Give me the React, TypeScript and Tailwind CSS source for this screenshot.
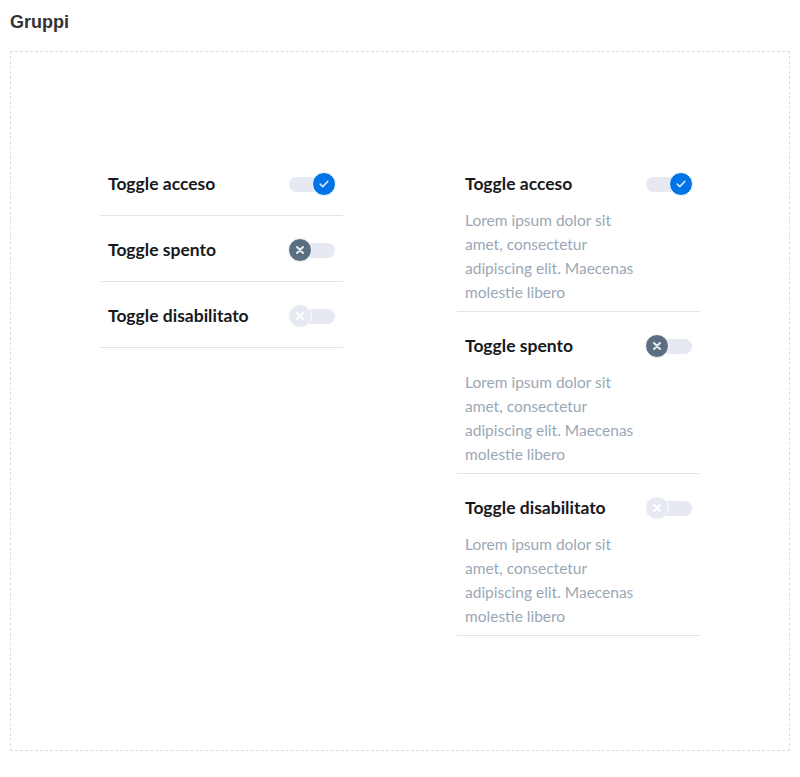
import React from "react";

type State = "on" | "off" | "disabled";

function Toggle({ state }: { state: State }) {
  const on = state === "on";
  return (
    <div className="relative w-[48px] h-6 shrink-0">
      <div className="absolute left-[1px] right-[1px] top-[5px] h-[15px] rounded-full bg-[#e6e9f2]" />
      <div
        className={
          "absolute top-0 w-6 h-6 rounded-full border-[1.5px] border-white flex items-center justify-center " +
          (on ? "right-0 bg-[#0073e6]" : state === "off" ? "left-0 bg-[#5c6f82]" : "left-0 bg-[#e6e9f2]")
        }
      >
        {on ? (
          <svg width="12" height="12" viewBox="0 0 12 12" fill="none">
            <path d="M2.2 6.2 L4.8 8.6 L9.8 3.4" stroke="#cfe3fa" strokeWidth="1.6" strokeLinecap="round" strokeLinejoin="round" />
          </svg>
        ) : (
          <svg width="10" height="10" viewBox="0 0 10 10" fill="none">
            <path d="M2 2 L8 8 M8 2 L2 8" stroke={state === "off" ? "#e8edf2" : "#ffffff"} strokeWidth="2" strokeLinecap="round" />
          </svg>
        )}
      </div>
    </div>
  );
}

const titleFont = { fontFamily: "Lato, 'Noto Sans', sans-serif" };

function SimpleRow({ label, state }: { label: string; state: State }) {
  return (
    <div className="flex items-center justify-between pl-2 pr-[7px] pt-[22px] pb-[19px] border-b border-[#e3e4e6]">
      <span className="text-[17.5px] leading-6 font-bold text-[#17191c]" style={titleFont}>
        {label}
      </span>
      <Toggle state={state} />
    </div>
  );
}

function DescRow({ label, state }: { label: string; state: State }) {
  return (
    <div className="pl-2 pr-[7px] pt-[22px] pb-[7px] border-b border-[#e3e4e6]">
      <div className="flex items-center justify-between">
        <span className="text-[17.5px] leading-6 font-bold text-[#17191c]" style={titleFont}>
          {label}
        </span>
        <Toggle state={state} />
      </div>
      <p className="mt-3 text-[15.5px] leading-6 text-[#9aa8b6] w-[180px]" style={titleFont}>
        Lorem ipsum dolor sit amet, consectetur adipiscing elit. Maecenas molestie libero
      </p>
    </div>
  );
}

export default function App() {
  return (
    <div className="bg-white w-[800px] h-[777px] p-[10px]">
      <h2
        className="text-[18px] leading-6 font-bold text-[#333333] mb-[17px]"
        style={{ fontFamily: "'Liberation Sans', Arial, sans-serif" }}
      >
        Gruppi
      </h2>
      <div className="h-[700px] border border-dashed border-[#dcdcdc] pt-[98px] pl-[89px] flex gap-[114px]">
        <div className="w-[243px]">
          <SimpleRow label="Toggle acceso" state="on" />
          <SimpleRow label="Toggle spento" state="off" />
          <SimpleRow label="Toggle disabilitato" state="disabled" />
        </div>
        <div className="w-[243px]">
          <DescRow label="Toggle acceso" state="on" />
          <DescRow label="Toggle spento" state="off" />
          <DescRow label="Toggle disabilitato" state="disabled" />
        </div>
      </div>
    </div>
  );
}
